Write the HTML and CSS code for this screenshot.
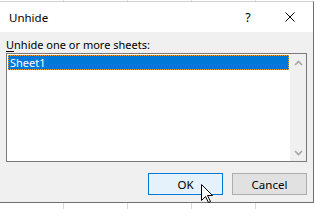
FILE: index.html
```html
<!DOCTYPE html>
<html>
<head>
<meta charset="utf-8">
<link rel="stylesheet" href="styles.css">
</head>
<body>
<div class="screen">
  <div class="dialog">
    <div class="titlebar">
      <span class="title">Unhide</span>
      <span class="tbtn help">?</span>
      <span class="tbtn close">
        <svg width="10" height="10" viewBox="0 0 10 10"><path d="M0.5 0.5 L9.5 9.5 M9.5 0.5 L0.5 9.5" stroke="#000" stroke-width="1" fill="none"/></svg>
      </span>
    </div>
    <div class="body">
      <div class="label"><u>U</u>nhide one or more sheets:</div>
      <div class="listbox">
        <div class="items">
          <div class="item selected">Sheet1</div>
        </div>
        <div class="scrollbar">
          <div class="sbtn">
            <svg width="9" height="6" viewBox="0 0 9 6"><path d="M1 5 L4.5 1.5 L8 5" stroke="#a6a6a6" stroke-width="1.6" fill="none"/></svg>
          </div>
          <div class="sbtn">
            <svg width="9" height="6" viewBox="0 0 9 6"><path d="M1 1 L4.5 4.5 L8 1" stroke="#a6a6a6" stroke-width="1.6" fill="none"/></svg>
          </div>
        </div>
      </div>
      <div class="buttons">
        <button class="btn default">OK</button>
        <button class="btn">Cancel</button>
      </div>
    </div>
  </div>
  <svg class="cursor" width="13" height="19" viewBox="0 0 13 19">
    <path d="M0.5 0.5 L0.5 16.5 L4.5 12.5 L7.5 18.5 L9.5 17.5 L6.5 11.5 L11.5 11.5 Z" fill="#fff" stroke="#000" stroke-width="1" stroke-linejoin="miter"/>
  </svg>
</div>
</body>
</html>
```
FILE: styles.css
```css
* { box-sizing: border-box; }
html, body { margin: 0; padding: 0; }
body {
  font-family: "Noto Sans", "Open Sans", sans-serif;
  font-size: 11px;
  color: #000;
  background: #fff;
}
.screen {
  position: relative;
  width: 315px;
  height: 209px;
  overflow: hidden;
  background-color: #fff;
  background-image: linear-gradient(to right, transparent 63px, #d9d9d9 63px, #d9d9d9 64px, transparent 64px);
  background-size: 64px 100%;
}
.dialog {
  position: absolute;
  left: -1px;
  top: 1px;
  width: 315px;
  height: 202px;
  border: 1px solid #6f6f6f;
  border-top-color: #d0d0d0;
  display: flex;
  flex-direction: column;
  background: #f0f0f0;
}
.titlebar {
  height: 30px;
  background: #fff;
  display: flex;
  align-items: center;
  padding-left: 9px;
}
.title { flex: 1; font-size: 11.5px; }
.tbtn {
  width: 46px;
  height: 30px;
  display: flex;
  align-items: center;
  justify-content: center;
}
.help { font-size: 12.5px; padding-left: 8px; }
.body {
  flex: 1;
  display: flex;
  flex-direction: column;
  padding: 5px 6px 0 6px;
}
.label {
  line-height: 16px;
  height: 16px;
}
.label u { text-decoration-thickness: 1px; text-underline-offset: 2px; }
.listbox {
  height: 109px;
  border: 1px solid #7a7a7a;
  background: #fff;
  display: flex;
}
.items {
  flex: 1;
  padding: 1px 1px 0 1px;
}
.item {
  height: 15px;
  line-height: 13px;
  padding-left: 1px;
  color: #fff;
}
.selected {
  background: #0078d7;
  border: 1px dotted #f0a030;
}
.scrollbar {
  width: 16px;
  background: #f0f0f0;
  display: flex;
  flex-direction: column;
  justify-content: space-between;
}
.sbtn {
  height: 17px;
  display: flex;
  align-items: center;
  justify-content: center;
}
.buttons {
  margin-top: 11px;
  display: flex;
  justify-content: flex-end;
  gap: 9px;
}
.btn {
  width: 75px;
  height: 22px;
  font-family: inherit;
  font-size: 11.5px;
  color: #000;
  background: #e1e1e1;
  border: 1px solid #adadad;
  padding: 0;
  margin: 0;
}
.btn.default {
  background: #e5f1fb;
  border-color: #0078d7;
}
.cursor {
  position: absolute;
  left: 201px;
  top: 184px;
}
```
